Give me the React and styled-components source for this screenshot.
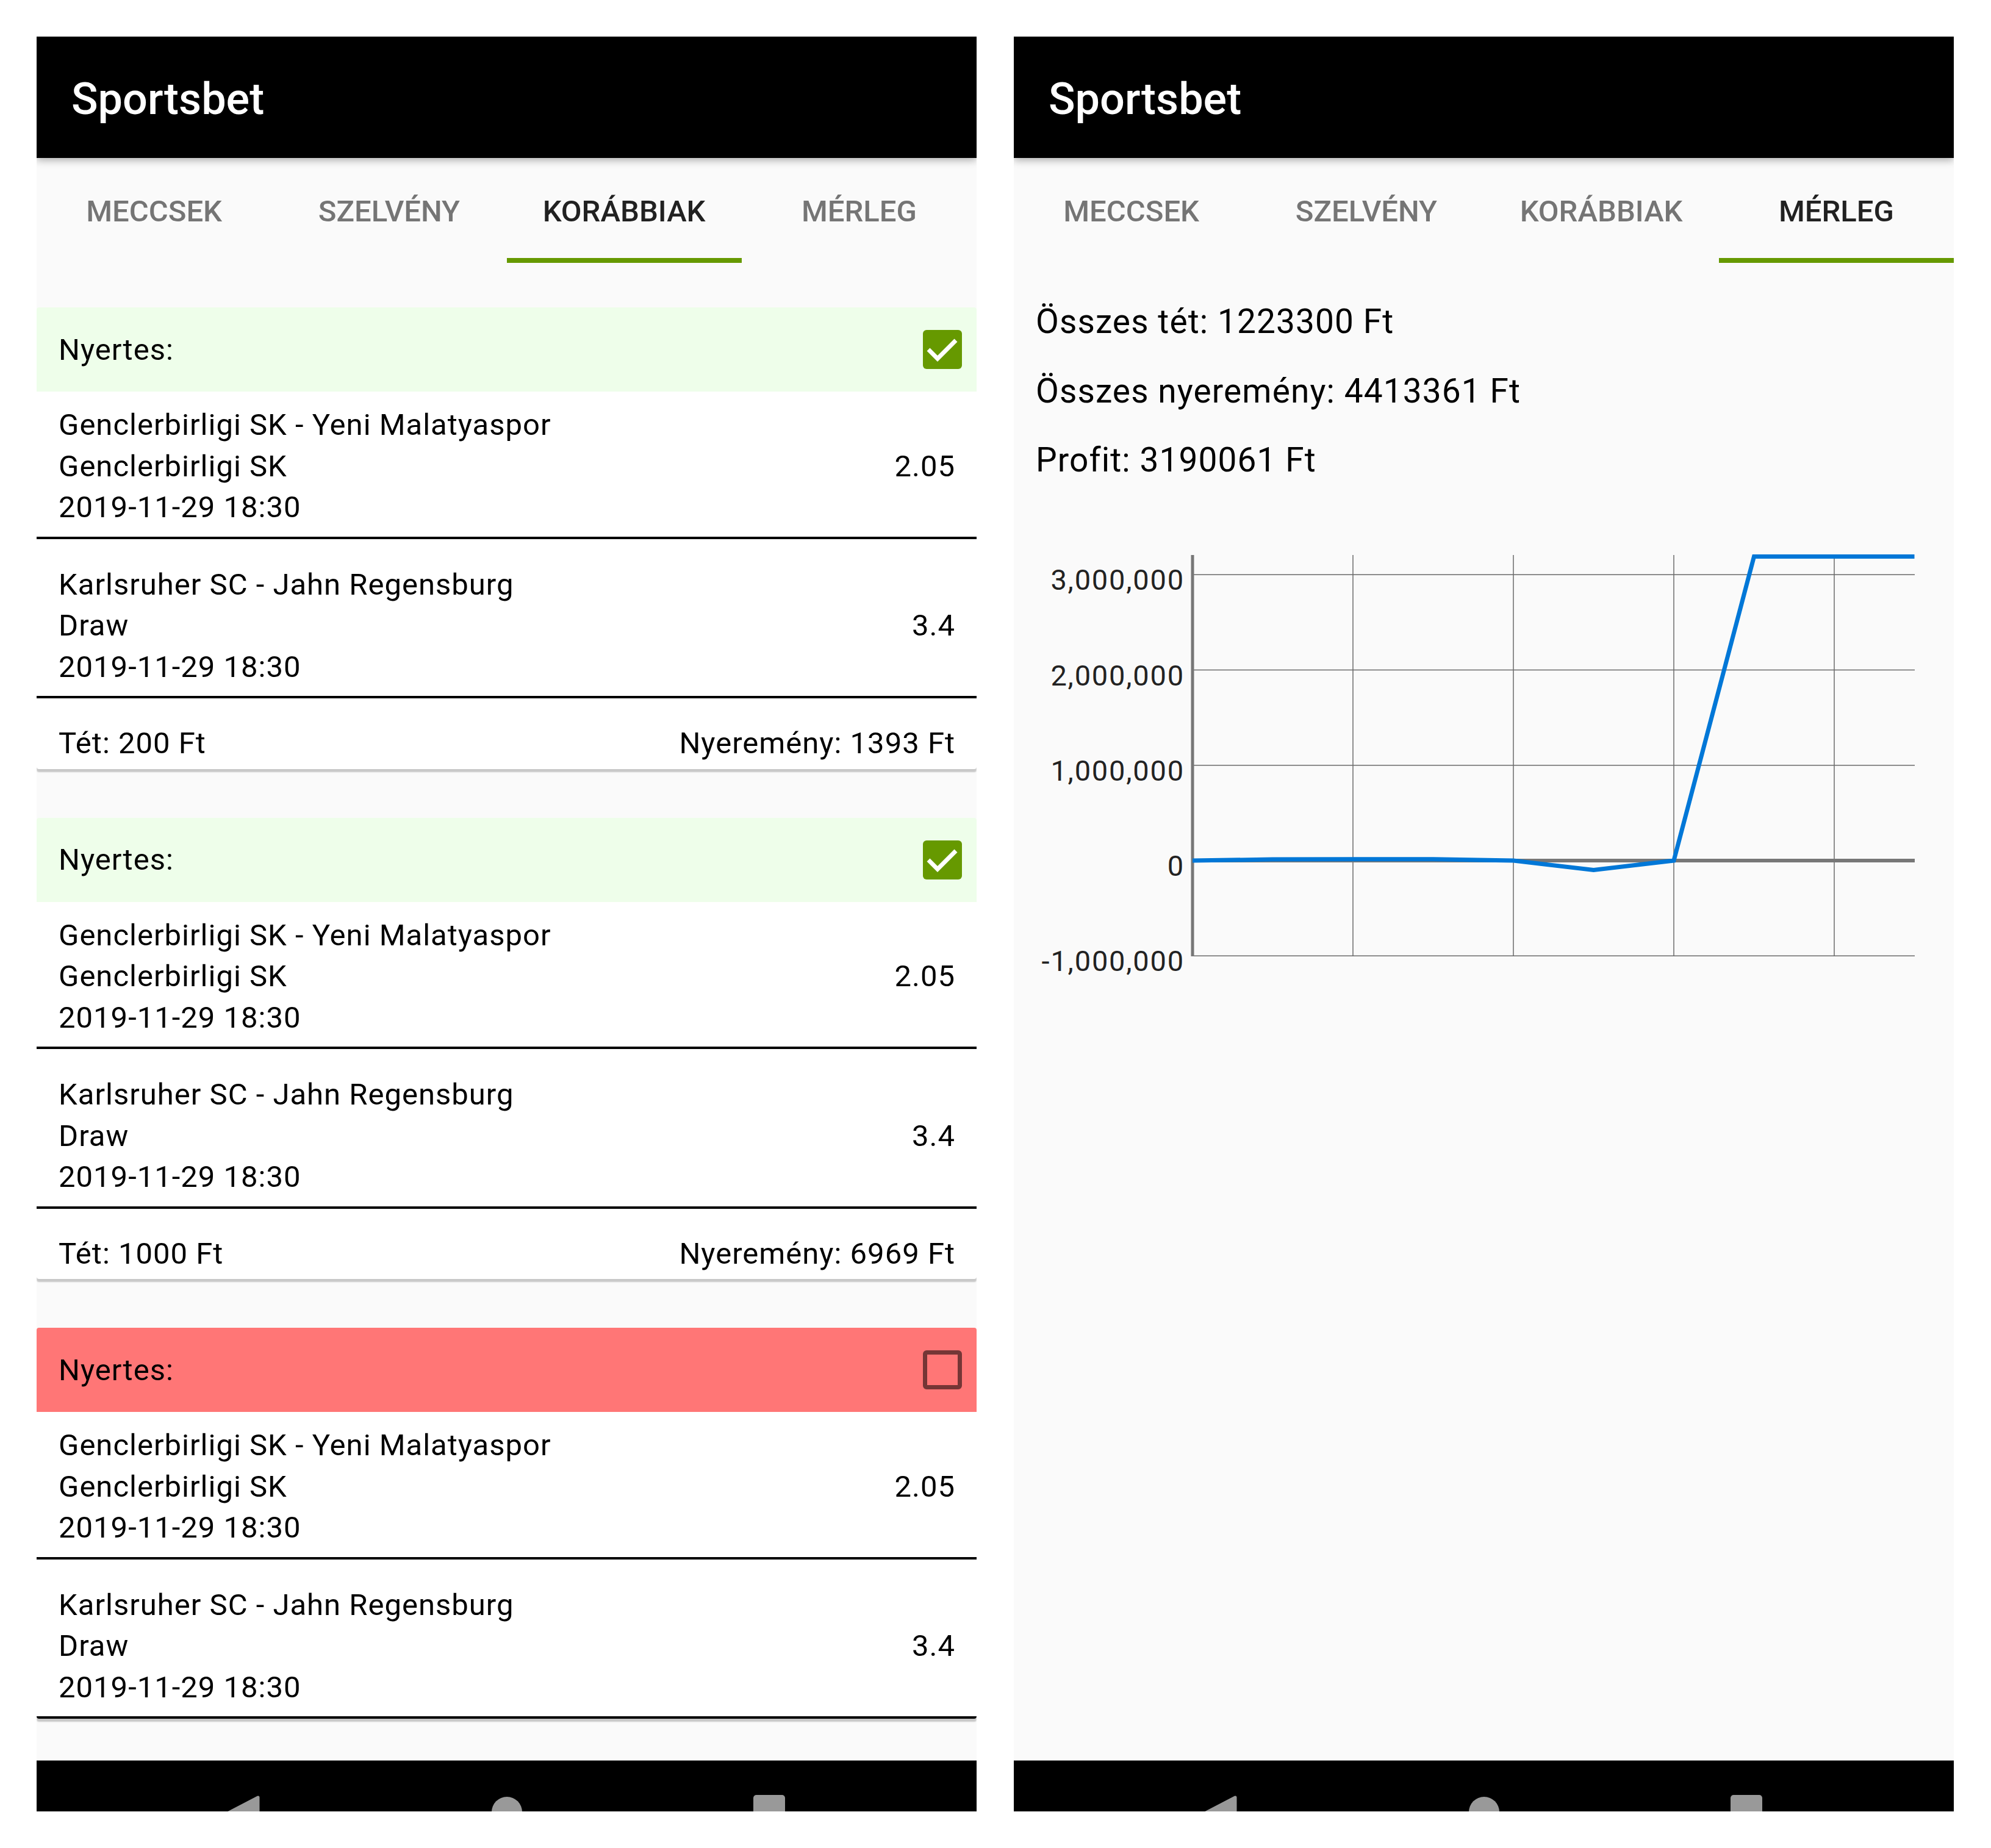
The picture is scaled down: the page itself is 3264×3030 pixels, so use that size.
import React from 'react';
import styled, { createGlobalStyle } from 'styled-components';

const GlobalStyle = createGlobalStyle`
  html, body {
    margin: 0;
    padding: 0;
    background: #ffffff;
  }
  body {
    font-family: Roboto, "Noto Sans", "Liberation Sans", sans-serif;
  }
`;

const Page = styled.div`
  display: flex;
  gap: 61px;
  padding: 60px 0 0 60px;
  width: 3264px;
  height: 3030px;
  box-sizing: border-box;
`;

const Phone = styled.div`
  width: 1541px;
  height: 2910px;
  display: flex;
  flex-direction: column;
  background: #fafafa;
  overflow: hidden;
`;

const AppBar = styled.div`
  height: 199px;
  flex-shrink: 0;
  box-sizing: border-box;
  display: flex;
  align-items: center;
  padding: 6px 0 0 57px;
  background: #000;
  color: #fff;
  font-size: 72px;
  font-weight: 500;
  position: relative;
  z-index: 2;
  box-shadow: 0 4px 12px rgba(0, 0, 0, 0.3);
`;

const TabBar = styled.div`
  height: 172px;
  flex-shrink: 0;
  display: grid;
  grid-template-columns: repeat(4, 1fr);
  background: #fafafa;
`;

const Tab = styled.div`
  display: flex;
  align-items: center;
  justify-content: center;
  box-sizing: border-box;
  padding-top: 10px;
  border-bottom: 8px solid ${p => (p.$active ? '#669900' : 'transparent')};
  font-size: 49px;
  font-weight: 500;
  color: ${p => (p.$active ? '#212121' : '#757575')};
`;

const Content = styled.div`
  flex: 1 1 auto;
  min-height: 0;
  overflow: hidden;
  padding-top: ${p => p.$top || 0}px;
`;

const Card = styled.div`
  background: #fff;
  border-radius: 4px;
  margin-bottom: 80px;
  box-shadow: 0 5px 2px 0 rgba(0, 0, 0, 0.2);
  overflow: hidden;
`;

const CardHeader = styled.div`
  height: 138px;
  display: flex;
  align-items: center;
  justify-content: space-between;
  padding: 0 24px 0 36px;
  background: ${p => (p.$won ? '#eefeea' : '#ff7676')};
  font-size: 49px;
  letter-spacing: 1px;
  color: #000;
`;

const Box = styled.div`
  width: 64px;
  height: 64px;
  box-sizing: border-box;
  border-radius: 6px;
  background: ${p => (p.$checked ? '#669900' : 'transparent')};
  border: ${p => (p.$checked ? 'none' : '7px solid rgba(0, 0, 0, 0.54)')};
  display: flex;
`;

const MatchRow = styled.div`
  display: flex;
  align-items: center;
  justify-content: space-between;
  padding: ${p => (p.$first ? 21 : 41)}px 35px 14px 36px;
  border-bottom: 4px solid #000;
  font-size: 49px;
  letter-spacing: 1px;
  line-height: 67.5px;
  color: #000;
`;

const MatchInfo = styled.div`
  display: flex;
  flex-direction: column;
`;

const CardFooter = styled.div`
  display: flex;
  justify-content: space-between;
  padding: 40px 35px 8px 36px;
  font-size: 49px;
  letter-spacing: 1px;
  line-height: 67.5px;
  color: #000;
`;

const Stats = styled.div`
  padding: 40px 36px 0;
  font-size: 55px;
  letter-spacing: 1.1px;
  line-height: 113.5px;
  color: #000;
`;

const ChartWrap = styled.div`
  margin-top: 69px;
  height: 760px;
`;

const NavBar = styled.div`
  height: 84px;
  flex-shrink: 0;
  box-sizing: border-box;
  border-top: 1px solid #8a8a8a;
  background: #000;
  overflow: hidden;
  display: flex;
  justify-content: center;
`;

const NavSlot = styled.div`
  width: 430px;
  display: flex;
  justify-content: center;
  padding-top: 56px;
`;

const Check = ({ checked }) => (
  <Box $checked={checked}>
    {checked && (
      <svg width="64" height="64" viewBox="0 0 64 64">
        <path d="M9 32 L24 47 L54 17" fill="none" stroke="#fff" strokeWidth="7" />
      </svg>
    )}
  </Box>
);

const bet = [
  {
    teams: 'Genclerbirligi SK - Yeni Malatyaspor',
    pick: 'Genclerbirligi SK',
    date: '2019-11-29 18:30',
    odds: '2.05',
  },
  {
    teams: 'Karlsruher SC - Jahn Regensburg',
    pick: 'Draw',
    date: '2019-11-29 18:30',
    odds: '3.4',
  },
];

const tickets = [
  { won: true, stake: 'Tét: 200 Ft', win: 'Nyeremény: 1393 Ft' },
  { won: true, stake: 'Tét: 1000 Ft', win: 'Nyeremény: 6969 Ft' },
  { won: false },
];

const tabs = ['MECCSEK', 'SZELVÉNY', 'KORÁBBIAK', 'MÉRLEG'];

const Tabs = ({ active }) => (
  <TabBar>
    {tabs.map(t => (
      <Tab key={t} $active={t === active}>{t}</Tab>
    ))}
  </TabBar>
);

const NavButtons = () => (
  <NavBar>
    <NavSlot>
      <svg width="64" height="60" viewBox="0 0 64 60">
        <polygon points="54,4 54,56 4,30" fill="#999" stroke="#999" strokeWidth="5" strokeLinejoin="round" />
      </svg>
    </NavSlot>
    <NavSlot>
      <svg width="64" height="60" viewBox="0 0 64 60">
        <circle cx="32" cy="28" r="25" fill="#999" />
      </svg>
    </NavSlot>
    <NavSlot>
      <svg width="64" height="60" viewBox="0 0 64 60">
        <rect x="6" y="0" width="52" height="52" rx="5" fill="#999" />
      </svg>
    </NavSlot>
  </NavBar>
);

const axisX = 293;
const rightX = 1477;
const valY = v => 530 - (v / 1000000) * 156.25;
const gridValues = [3000000, 2000000, 1000000, 0, -1000000];
const profits = [0, 12000, 15000, 15000, 0, -100000, 0, 3190061, 3190061, 3190061];

const BalanceChart = () => {
  const points = profits
    .map((v, i) => `${axisX + i * 131.5},${valY(v).toFixed(1)}`)
    .join(' ');
  return (
    <svg width="1541" height="760" viewBox="0 0 1541 760">
      {[1, 2, 3, 4].map(k => (
        <line key={k} x1={axisX + 263 * k} y1="29" x2={axisX + 263 * k} y2="686" stroke="#6a6a6a" strokeWidth="1.5" />
      ))}
      {gridValues.map(v => (
        <line
          key={v}
          x1={axisX}
          y1={valY(v)}
          x2={rightX}
          y2={valY(v)}
          stroke={v === 0 ? '#777' : '#6a6a6a'}
          strokeWidth={v === 0 ? 6 : 1.5}
        />
      ))}
      <line x1={axisX} y1="29" x2={axisX} y2="687" stroke="#777" strokeWidth="5" />
      {gridValues.map(v => (
        <text
          key={v}
          x="280"
          y={valY(v) + 25}
          textAnchor="end"
          fontSize="47"
          letterSpacing="1.8"
          fill="#222"
          fontFamily="Roboto, sans-serif"
        >
          {v.toLocaleString('en-US')}
        </text>
      ))}
      <polyline points={points} fill="none" stroke="#0077d7" strokeWidth="7" strokeLinejoin="miter" />
    </svg>
  );
};

export default function App() {
  return (
    <>
      <GlobalStyle />
      <Page>
        <Phone>
          <AppBar>Sportsbet</AppBar>
          <Tabs active="KORÁBBIAK" />
          <Content $top={73}>
            {tickets.map((t, i) => (
              <Card key={i}>
                <CardHeader $won={t.won}>
                  <span>Nyertes:</span>
                  <Check checked={t.won} />
                </CardHeader>
                {bet.map((m, j) => (
                  <MatchRow key={j} $first={j === 0}>
                    <MatchInfo>
                      <span>{m.teams}</span>
                      <span>{m.pick}</span>
                      <span>{m.date}</span>
                    </MatchInfo>
                    <span>{m.odds}</span>
                  </MatchRow>
                ))}
                {t.stake && (
                  <CardFooter>
                    <span>{t.stake}</span>
                    <span>{t.win}</span>
                  </CardFooter>
                )}
              </Card>
            ))}
          </Content>
          <NavButtons />
        </Phone>
        <Phone>
          <AppBar>Sportsbet</AppBar>
          <Tabs active="MÉRLEG" />
          <Content>
            <Stats>
              <div>Összes tét: 1223300 Ft</div>
              <div>Összes nyeremény: 4413361 Ft</div>
              <div>Profit: 3190061 Ft</div>
            </Stats>
            <ChartWrap>
              <BalanceChart />
            </ChartWrap>
          </Content>
          <NavButtons />
        </Phone>
      </Page>
    </>
  );
}
